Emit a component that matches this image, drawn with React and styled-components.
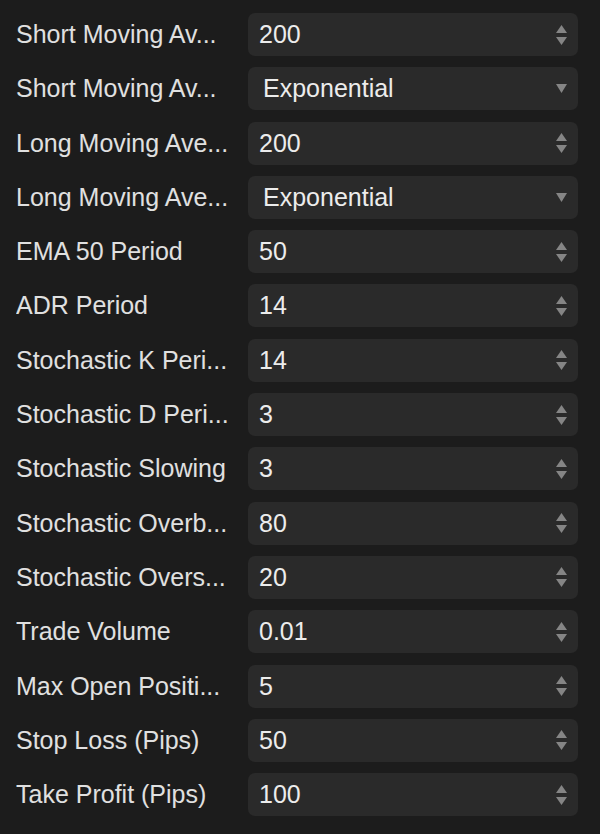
import React from 'react';
import styled, { createGlobalStyle } from 'styled-components';

const Global = createGlobalStyle`
  html, body {
    margin: 0;
    padding: 0;
    background: #1c1c1c;
  }
  body {
    font-family: "Liberation Sans", Arial, sans-serif;
  }
`;

// shown = label as the narrow column cuts it
const params = [
  { label: 'Short Moving Average Period', shown: 'Short Moving Av...', value: '200' },
  { label: 'Short Moving Average Type', shown: 'Short Moving Av...', value: 'Exponential', select: true },
  { label: 'Long Moving Average Period', shown: 'Long Moving Ave...', value: '200' },
  { label: 'Long Moving Average Type', shown: 'Long Moving Ave...', value: 'Exponential', select: true },
  { label: 'EMA 50 Period', value: '50' },
  { label: 'ADR Period', value: '14' },
  { label: 'Stochastic K Period', shown: 'Stochastic K Peri...', value: '14' },
  { label: 'Stochastic D Period', shown: 'Stochastic D Peri...', value: '3' },
  { label: 'Stochastic Slowing', value: '3' },
  { label: 'Stochastic Overbought', shown: 'Stochastic Overb...', value: '80' },
  { label: 'Stochastic Oversold', shown: 'Stochastic Overs...', value: '20' },
  { label: 'Trade Volume', value: '0.01' },
  { label: 'Max Open Positions', shown: 'Max Open Positi...', value: '5' },
  { label: 'Stop Loss (Pips)', value: '50' },
  { label: 'Take Profit (Pips)', value: '100' },
];

export default function App() {
  return (
    <Panel>
      <Global />
      {params.map((p) => (
        <Row key={p.label}>
          <Label title={p.label}>{p.shown || p.label}</Label>
          <Field $select={p.select}>
            <Value>{p.value}</Value>
            {p.select ? (
              <Arrows>
                <svg width="11" height="9" viewBox="0 0 11 9">
                  <path d="M0 0 H11 L5.5 9 Z" fill="#858585" />
                </svg>
              </Arrows>
            ) : (
              <Arrows>
                <svg width="11" height="8" viewBox="0 0 11 8">
                  <path d="M5.5 0 L11 8 H0 Z" fill="#858585" />
                </svg>
                <svg width="11" height="8" viewBox="0 0 11 8">
                  <path d="M0 0 H11 L5.5 8 Z" fill="#858585" />
                </svg>
              </Arrows>
            )}
          </Field>
        </Row>
      ))}
    </Panel>
  );
}

const Panel = styled.div`
  display: flex;
  flex-direction: column;
  gap: 11.3px;
  padding: 13px 22px 17px 16px;
  min-height: 834px;
  box-sizing: border-box;
  background: #1c1c1c;
`;

const Row = styled.div`
  display: grid;
  grid-template-columns: 220px 1fr;
  column-gap: 12px;
  align-items: center;
  height: 43px;
`;

const Label = styled.div`
  color: #e0e0e0;
  font-size: 25px;
  white-space: nowrap;
  overflow: hidden;
`;

const Field = styled.div`
  display: flex;
  align-items: center;
  height: 43px;
  box-sizing: border-box;
  padding: 0 10px 0 ${(p) => (p.$select ? '15px' : '11px')};
  background: #2a2a2a;
  border-radius: 7px;
`;

const Value = styled.div`
  flex: 1;
  color: #ececec;
  font-size: 25px;
  white-space: nowrap;
`;

const Arrows = styled.div`
  display: flex;
  flex-direction: column;
  align-items: center;
  gap: 4px;
  width: 14px;
`;
